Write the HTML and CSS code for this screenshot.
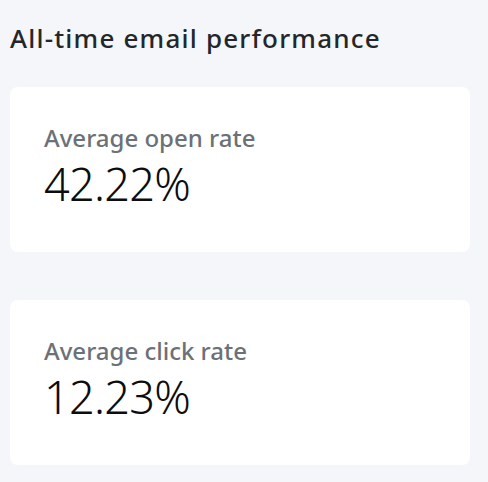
FILE: index.html
```html
<!DOCTYPE html>
<html>
<head>
<meta charset="utf-8">
<link rel="stylesheet" href="styles.css">
</head>
<body>
<main class="page">
  <h2 class="title">All-time email performance</h2>
  <div class="cards">
    <section class="card">
      <div class="label">Average open rate</div>
      <div class="value">42.22%</div>
    </section>
    <section class="card">
      <div class="label">Average click rate</div>
      <div class="value">12.23%</div>
    </section>
  </div>
</main>
</body>
</html>
```

FILE: styles.css
```css
html, body {
  margin: 0;
  padding: 0;
  background: #f4f6f9;
}
.page {
  font-family: "Noto Sans", "Open Sans", sans-serif;
  padding: 21px 18px 0 10px;
  display: flex;
  flex-direction: column;
}
.title {
  margin: 0;
  font-size: 26px;
  font-weight: 500;
  letter-spacing: 1.2px;
  line-height: 34px;
  color: #23272b;
}
.cards {
  margin-top: 32px;
  display: flex;
  flex-direction: column;
  gap: 48px;
}
.card {
  background: #ffffff;
  border-radius: 8px;
  height: 165px;
  box-sizing: border-box;
  padding: 36px 34px 0 34px;
}
.label {
  font-size: 24px;
  font-weight: 500;
  line-height: 30px;
  color: #6b7177;
}
.value {
  font-size: 45px;
  font-weight: 360;
  letter-spacing: -0.7px;
  line-height: 50px;
  color: #0c0d0e;
  margin-top: 6px;
}
```
